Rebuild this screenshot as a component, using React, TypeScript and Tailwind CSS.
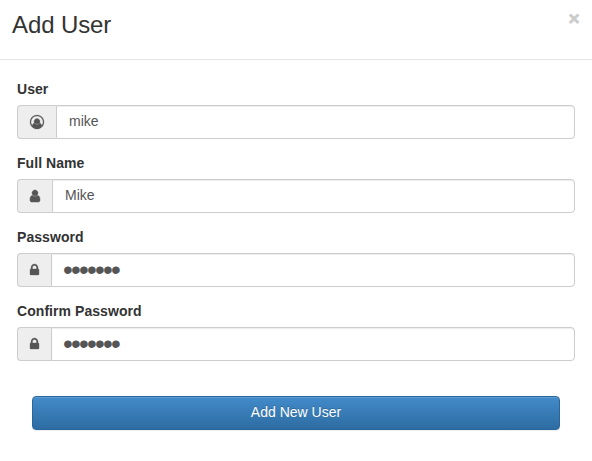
import type { ReactNode } from 'react';

function UserCircleIcon() {
  return (
    <svg className="h-3.5 w-3.5 overflow-visible" viewBox="0 0 1792 1792" fill="currentColor" stroke="currentColor" strokeWidth="30" aria-hidden="true">
      <path d="M896 0q182 0 348 71t286 191 191 286 71 348q0 181-70.5 347t-190.5 286-286 191.5-349 71.5-349-71-285.5-191.5-190.5-286-71-347.5 71-348 191-286 286-191 348-71zM1515 1351q149-205 149-455 0-156-61-298t-164-245-245-164-298-61-298 61-245 164-164 245-61 298q0 250 149 455 66-327 306-327 131 128 313 128t313-128q240 0 306 327zM1280 832q0-159-112.5-271.5t-271.5-112.5-271.5 112.5-112.5 271.5 112.5 271.5 271.5 112.5 271.5-112.5 112.5-271.5z" />
    </svg>
  );
}

function UserIcon() {
  return (
    <svg className="h-3.5 w-2.5 overflow-visible" viewBox="0 0 1280 1792" fill="currentColor" stroke="currentColor" strokeWidth="60" aria-hidden="true">
      <path d="M1280 1399q0 109-62.5 187t-150.5 78h-854q-88 0-150.5-78t-62.5-187q0-85 8.5-160.5t31.5-152 58.5-131 94-89 134.5-34.5q131 128 313 128t313-128q76 0 134.5 34.5t94 89 58.5 131 31.5 152 8.5 160.5zM1024 512q0 159-112.5 271.5t-271.5 112.5-271.5-112.5-112.5-271.5 112.5-271.5 271.5-112.5 271.5 112.5 112.5 271.5z" />
    </svg>
  );
}

function LockIcon() {
  return (
    <svg className="h-3.5 w-[9px] overflow-visible" viewBox="0 0 1152 1792" fill="currentColor" stroke="currentColor" strokeWidth="40" aria-hidden="true">
      <path d="M320 768h512v-192q0-106-75-181t-181-75-181 75-75 181v192zM1152 864v576q0 40-28 68t-68 28h-960q-40 0-68-28t-28-68v-576q0-40 28-68t68-28h32v-192q0-184 132-316t316-132 316 132 132 316v192h32q40 0 68 28t28 68z" />
    </svg>
  );
}

type FieldProps = { id: string; label: string; icon: ReactNode; value: string; type?: 'text' | 'password' };

function Field({ id, label, icon, value, type = 'text' }: FieldProps) {
  const textStyle =
    type === 'password'
      ? 'pl-[11px] text-[28px] leading-6 tracking-[-1.8px]'
      : 'pl-3 pt-[5px] pb-[7px] text-sm leading-5';
  return (
    <div className="mb-[15px]">
      <label htmlFor={id} className="-mt-px mb-1.5 block text-sm leading-5 font-bold tracking-[0.06px] text-[#333]">
        {label}
      </label>
      <div className="flex h-[34px]">
        <span className="flex items-center rounded-l border border-r-0 border-[#ccc] bg-[#eee] px-3 text-[#555]">
          {icon}
        </span>
        <input
          id={id}
          type={type}
          defaultValue={value}
          className={`min-w-0 flex-1 rounded-r border border-[#ccc] bg-white pr-3 text-[#555] shadow-[inset_0_1px_1px_rgba(0,0,0,0.075)] outline-none ${textStyle}`}
        />
      </div>
    </div>
  );
}

export default function App() {
  return (
    <div className="h-[461px] bg-white font-['Liberation_Sans',Arial,sans-serif] text-[#333]">
      <header className="flex h-[60px] items-start justify-between border-b border-[#e5e5e5] pt-2 pr-3 pl-3">
        <h4 className="text-2xl leading-[34px] font-normal tracking-[-0.1px]">Add User</h4>
        <button type="button" aria-label="Close" className="w-3 text-[19px] leading-[21px] font-bold text-black opacity-20 [-webkit-text-stroke:0.8px_black]">
          ×
        </button>
      </header>
      <form className="px-[17px] pt-5">
        <Field id="user" label="User" icon={<UserCircleIcon />} value="mike" />
        <Field id="name" label="Full Name" icon={<UserIcon />} value="Mike" />
        <Field id="password" label="Password" icon={<LockIcon />} value="1234567" type="password" />
        <Field id="confirm" label="Confirm Password" icon={<LockIcon />} value="1234567" type="password" />
        <div className="px-[15px] pt-5">
          <button
            type="button"
            className="block h-[34px] w-full rounded border border-[#2b669a] bg-linear-to-b from-[#428bca] to-[#2d6ca2] pb-0.5 text-sm leading-5 text-white shadow-[inset_0_1px_0_rgba(255,255,255,0.15),0_1px_1px_rgba(0,0,0,0.075)] [text-shadow:0_-1px_0_rgba(0,0,0,0.2)]"
          >
            Add New User
          </button>
        </div>
      </form>
    </div>
  );
}
